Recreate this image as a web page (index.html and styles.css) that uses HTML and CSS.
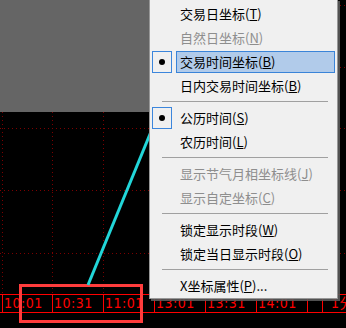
FILE: index.html
```html
<!doctype html>
<html lang="zh-CN">
  <head>
    <meta charset="UTF-8" />
    <meta name="viewport" content="width=device-width, initial-scale=1.0" />
    <title>X坐标菜单</title>
    <link rel="stylesheet" href="styles.css">
  </head>
  <body>
    <div class="screen">
      <div class="plot">
        <div class="shade"></div>
      </div>

      <div class="axis">
        <span class="tick first">10:01</span>
        <span class="tick">10:31</span>
        <span class="tick">11:01</span>
        <span class="tick">13:01</span>
        <span class="tick">13:31</span>
        <span class="tick">14:01</span>
        <span class="tick short"></span>
        <span class="tick last">1分</span>
      </div>

      <div class="callout"></div>

      <svg class="pointer" width="346" height="328" viewBox="0 0 346 328">
        <line x1="88" y1="285" x2="171" y2="83" stroke="#22d6d9" stroke-width="3" />
        <polygon points="174,74 164,85 176,89" fill="#22d6d9" />
      </svg>

      <ul class="menu">
        <li class="item"><span class="check"></span><span class="label">交易日坐标(<u>T</u>)</span></li>
        <li class="item disabled"><span class="check"></span><span class="label">自然日坐标(<u>N</u>)</span></li>
        <li class="item active"><span class="check on"></span><span class="label">交易时间坐标(<u>B</u>)</span></li>
        <li class="item"><span class="check"></span><span class="label">日内交易时间坐标(<u>B</u>)</span></li>
        <li class="sep"></li>
        <li class="item"><span class="check on"></span><span class="label">公历时间(<u>S</u>)</span></li>
        <li class="item"><span class="check"></span><span class="label">农历时间(<u>L</u>)</span></li>
        <li class="sep"></li>
        <li class="item disabled"><span class="check"></span><span class="label">显示节气月相坐标线(<u>J</u>)</span></li>
        <li class="item disabled"><span class="check"></span><span class="label">显示自定坐标(<u>C</u>)</span></li>
        <li class="sep"></li>
        <li class="item"><span class="check"></span><span class="label">锁定显示时段(<u>W</u>)</span></li>
        <li class="item"><span class="check"></span><span class="label">锁定当日显示时段(<u>O</u>)</span></li>
        <li class="sep"></li>
        <li class="item"><span class="check"></span><span class="label">X坐标属性(<u>P</u>)...</span></li>
      </ul>
    </div>
  </body>
</html>
```

FILE: styles.css
```css
body {
  margin: 0;
  background-color: #000;
  overflow: hidden;
}

.screen {
  position: relative;
  width: 346px;
  height: 328px;
  overflow: hidden;
  background-color: #000;
}

/* chart area with dotted dark red grid */
.plot {
  height: 294px;
  background-image:
    repeating-linear-gradient(to right, #7c0000 0 1px, transparent 1px 4px),
    repeating-linear-gradient(to right, #7c0000 0 1px, transparent 1px 4px),
    repeating-linear-gradient(to right, #7c0000 0 1px, transparent 1px 4px),
    repeating-linear-gradient(to right, #7c0000 0 1px, transparent 1px 4px),
    repeating-linear-gradient(to right, #7c0000 0 1px, transparent 1px 4px),
    repeating-linear-gradient(to bottom, #7c0000 0 1px, transparent 1px 4px),
    repeating-linear-gradient(to bottom, #7c0000 0 1px, transparent 1px 4px),
    repeating-linear-gradient(to bottom, #7c0000 0 1px, transparent 1px 4px);
  background-size:
    100% 1px, 100% 1px, 100% 1px, 100% 1px, 100% 1px,
    1px 100%, 1px 100%, 1px 100%;
  background-position:
    0 5px, 0 67px, 0 128px, 0 190px, 0 253px,
    2px 0, 52px 0, 103px 0;
  background-repeat: no-repeat;
}

.shade {
  width: 200px;
  height: 112px;
  background-color: #656565;
}

/* time axis */
.axis {
  display: flex;
  height: 19px;
  padding-left: 2px;
  box-sizing: border-box;
  border-top: 1px solid #ff0000;
  border-bottom: 1px solid #ff0000;
}

.tick {
  flex: none;
  width: 51px;
  box-sizing: border-box;
  border-left: 1px solid #ff0000;
  padding-left: 1px;
  color: #ff0000;
  font-family: "Liberation Sans Narrow", "DejaVu Sans Condensed", "Noto Sans CJK SC", sans-serif;
  font-size: 14px;
  line-height: 17px;
  letter-spacing: 0.5px;
  white-space: nowrap;
}

.tick.first {
  width: 50px;
}

.tick.short {
  width: 15px;
}

.tick.last {
  width: auto;
  padding-left: 8px;
}

.callout {
  position: absolute;
  left: 19px;
  top: 284px;
  width: 124px;
  height: 39px;
  box-sizing: border-box;
  border: 3px solid #ff3c3c;
}

.pointer {
  position: absolute;
  left: 0;
  top: 0;
}

/* context menu */
.menu {
  position: absolute;
  left: 149px;
  top: -1px;
  width: 189px;
  margin: 0;
  padding: 2px 0 0;
  box-sizing: border-box;
  list-style: none;
  background-color: #f0f0f0;
  border: 1px solid #979797;
  box-shadow: 2px 2px 0 rgba(90, 90, 90, 0.9);
  font-family: "Noto Sans CJK SC", sans-serif;
  font-size: 13px;
  color: #000;
}

.item {
  display: flex;
  align-items: center;
  height: 24px;
}

.check {
  flex: none;
  display: flex;
  justify-content: center;
  align-items: center;
  width: 20px;
  height: 22px;
  margin-left: 2px;
  box-sizing: border-box;
}

.check.on {
  border: 1px solid #3c86dc;
}

.check.on::after {
  content: "";
  width: 6px;
  height: 6px;
  border-radius: 50%;
  background-color: #000;
}

.label {
  flex: 1;
  height: 22px;
  margin: 0 2px 0 4px;
  padding-left: 3px;
  box-sizing: border-box;
  border: 1px solid transparent;
  line-height: 20px;
  white-space: nowrap;
}

.label u {
  text-underline-offset: 1px;
}

.item.active .label {
  background-color: #b1cbea;
  border-color: #3a84d8;
}

.item.disabled {
  color: #8e8e8e;
}

.sep {
  height: 1px;
  margin: 3px 9px 4px 12px;
  background-color: #a0a0a0;
}
```
